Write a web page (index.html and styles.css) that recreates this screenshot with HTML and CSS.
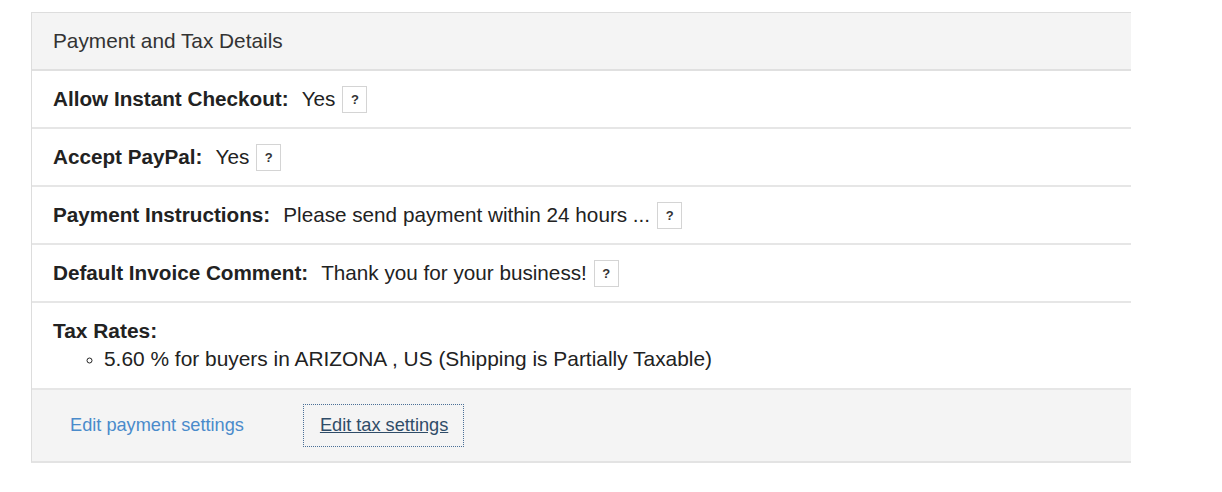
FILE: index.html
```html
<!DOCTYPE html>
<html>
<head>
<meta charset="utf-8">
<link rel="stylesheet" href="styles.css">
</head>
<body>
<div class="panel">
  <div class="panel-head">Payment and Tax Details</div>
  <div class="row"><span class="label">Allow Instant Checkout:</span><span class="value">Yes</span><span class="help">?</span></div>
  <div class="row"><span class="label">Accept PayPal:</span><span class="value">Yes</span><span class="help">?</span></div>
  <div class="row"><span class="label">Payment Instructions:</span><span class="value">Please send payment within 24 hours ...</span><span class="help">?</span></div>
  <div class="row"><span class="label">Default Invoice Comment:</span><span class="value">Thank you for your business!</span><span class="help">?</span></div>
  <div class="row tax">
    <div class="label">Tax Rates:</div>
    <ul class="rates"><li>5.60 % for buyers in ARIZONA , US (Shipping is Partially Taxable)</li></ul>
  </div>
  <div class="panel-foot">
    <a class="link" href="#">Edit payment settings</a>
    <a class="link focused" href="#">Edit tax settings</a>
  </div>
</div>
</body>
</html>
```

FILE: styles.css
```css
html, body {
  margin: 0;
  padding: 0;
  background: #fff;
}
body {
  font-family: "Liberation Sans", Arial, sans-serif;
  color: #333;
  padding: 12px 0 0 31px;
}
.panel {
  width: 1099px;
  border-top: 1px solid #ddd;
  border-left: 1px solid #ddd;
  border-bottom: 2px solid #e3e3e3;
}
.panel-head {
  background: #f4f4f4;
  height: 58px;
  box-sizing: border-box;
  padding: 0 21px;
  display: flex;
  align-items: center;
  font-size: 20.8px;
  color: #333;
  border-bottom: 2px solid #e0e0e0;
}
.row {
  height: 58px;
  box-sizing: border-box;
  padding: 0 21px;
  display: flex;
  align-items: center;
  font-size: 20.7px;
  border-bottom: 2px solid #e6e6e6;
}
.label {
  font-weight: bold;
  color: #222;
}
.value {
  margin-left: 13px;
  color: #222;
}
.help {
  margin-left: 7px;
  width: 25px;
  height: 27px;
  box-sizing: border-box;
  border: 1px solid #d4d4d4;
  display: inline-flex;
  align-items: center;
  justify-content: center;
  font-size: 13px;
  font-weight: bold;
  color: #333;
  background: #fff;
}
.row.tax {
  height: 87px;
  display: block;
  padding-top: 16px;
  font-size: 20.9px;
}
.rates {
  margin: 4px 0 0 0;
  padding: 0 0 0 51px;
  list-style: circle;
  color: #222;
}
.rates li::marker {
  font-size: 17px;
}
.panel-foot {
  background: #f4f4f4;
  height: 71px;
  box-sizing: border-box;
  padding: 0 38px;
  display: flex;
  align-items: center;
  font-size: 18.2px;
}
.link {
  color: #4a8bcb;
  text-decoration: none;
}
.link.focused {
  margin-left: 60px;
  color: #2f4c68;
  text-decoration: underline;
  outline: 1px dotted #4a6f96;
  padding: 10px 15px 10px 16px;
}
```
